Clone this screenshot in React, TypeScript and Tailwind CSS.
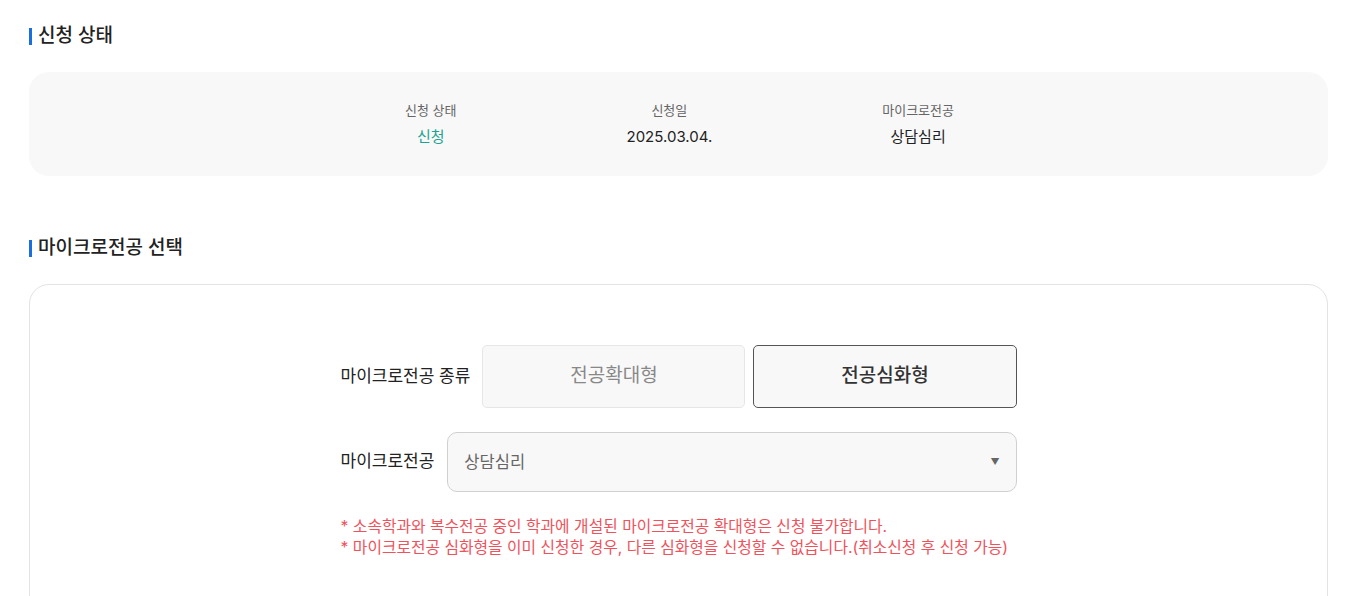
import React from "react";

export default function App() {
  const font = { fontFamily: 'Inter, "Noto Sans CJK KR", "Noto Sans", sans-serif' };
  return (
    <div className="w-[1357px] h-[596px] overflow-hidden bg-white px-[29px] pt-[23px]" style={font}>
      <h2 className="flex items-center gap-[6px] text-[19px] font-medium text-[#222] leading-[26px]">
        <span className="w-[3px] h-[17px] bg-[#1a6fe0]" />
        신청 상태
      </h2>
      <div className="mt-[23px] h-[104px] rounded-[20px] bg-[#f8f8f8] flex justify-center items-start gap-[170px] pt-[28px] pl-[2px]">
        <div className="flex flex-col items-center">
          <span className="text-[13px] text-[#666] leading-[20px]">신청 상태</span>
          <span className="mt-[6px] text-[15px] text-[#1ea393] leading-[22px]">신청</span>
        </div>
        <div className="flex flex-col items-center">
          <span className="text-[13px] text-[#666] leading-[20px]">신청일</span>
          <span className="mt-[6px] text-[15px] text-[#222] leading-[22px]">2025.03.04.</span>
        </div>
        <div className="flex flex-col items-center">
          <span className="text-[13px] text-[#666] leading-[20px]">마이크로전공</span>
          <span className="mt-[6px] text-[15px] text-[#222] leading-[22px]">상담심리</span>
        </div>
      </div>

      <h2 className="mt-[59px] flex items-center gap-[6px] text-[19px] font-medium text-[#222] leading-[26px]">
        <span className="w-[3px] h-[17px] bg-[#1a6fe0]" />
        마이크로전공 선택
      </h2>
      <div className="mt-[23px] h-[400px] rounded-[20px] border border-[#e3e3e3] bg-white pt-[60px]">
        <div className="w-[676px] mx-auto">
          <div className="flex items-center">
            <span className="text-[17px] text-[#222] mr-[12px] whitespace-nowrap">마이크로전공 종류</span>
            <div className="flex-1 flex gap-[8px]">
              <button className="flex-1 h-[63px] rounded-[5px] border border-[#e6e6e6] bg-[#f8f8f8] text-[19px] text-[#888]">
                전공확대형
              </button>
              <button className="flex-1 h-[63px] rounded-[5px] border border-[#555] bg-[#f8f8f8] text-[19px] font-medium text-[#333]">
                전공심화형
              </button>
            </div>
          </div>
          <div className="flex items-center mt-[24px]">
            <span className="text-[17px] text-[#222] mr-[13px] whitespace-nowrap">마이크로전공</span>
            <div className="flex-1 h-[60px] rounded-[10px] border border-[#d0d0d0] bg-[#f8f8f8] flex items-center justify-between pl-[16px] pr-[16px]">
              <span className="text-[16.5px] text-[#666]">상담심리</span>
              <span className="text-[9px] text-[#666]">▼</span>
            </div>
          </div>
          <div className="mt-[24px] text-[15.8px] leading-[21px] text-[#f0525c] whitespace-nowrap">
            <p>* 소속학과와 복수전공 중인 학과에 개설된 마이크로전공 확대형은 신청 불가합니다.</p>
            <p>* 마이크로전공 심화형을 이미 신청한 경우, 다른 심화형을 신청할 수 없습니다.(취소신청 후 신청 가능)</p>
          </div>
        </div>
      </div>
    </div>
  );
}
